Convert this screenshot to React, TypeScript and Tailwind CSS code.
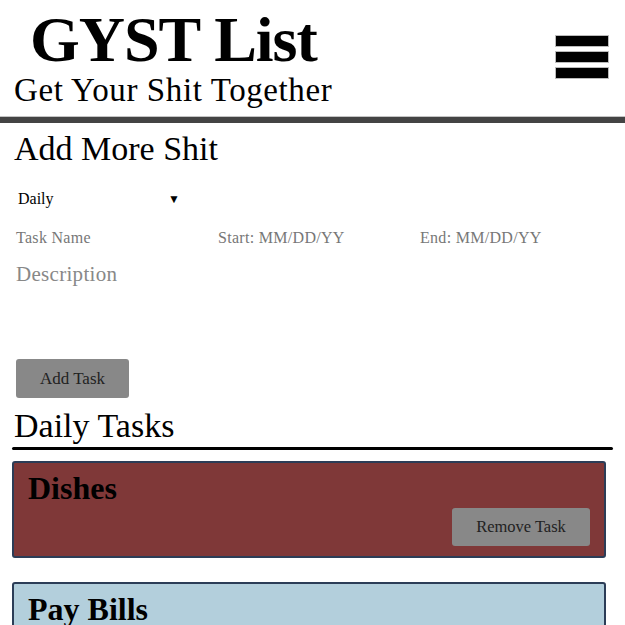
import React from 'react';

const serif = { fontFamily: '"Liberation Serif", "DejaVu Serif", serif' };

const tasks = [
  { name: 'Dishes', color: 'bg-[#7f3838]', removable: true },
  { name: 'Pay Bills', color: 'bg-[#b3cfdc]', removable: true },
];

const App: React.FC = () => {
  return (
    <div className="w-[625px] h-[625px] overflow-hidden bg-white text-black" style={serif}>
      {/* header */}
      <header className="flex justify-between items-start h-[123px] border-b-[6px] border-[#444] shadow-[0_-1px_0_#c4c4c4_inset]">
        <div className="flex flex-col">
          <h1 className="pl-[30px] pt-[8px] text-[64px] font-bold leading-[64px] tracking-[-1px]">GYST List</h1>
          <p className="pl-[14px] text-[33px] leading-[36px] tracking-[0.6px]">Get Your Shit Together</p>
        </div>
        <button className="mt-[35px] mr-[16px] flex flex-col gap-[4px]">
          <span className="block w-[54px] h-[12px] bg-black border border-[#bbb]" />
          <span className="block w-[54px] h-[12px] bg-black border border-[#bbb]" />
          <span className="block w-[54px] h-[12px] bg-black border border-[#bbb]" />
        </button>
      </header>

      {/* add form */}
      <section className="px-[14px]">
        <h2 className="mt-[6px] text-[34px] leading-[40px]">Add More Shit</h2>
        <div className="mt-[18px] flex items-center w-[166px] pl-[4px] text-[16px]">
          <span className="flex-1">Daily</span>
          <span className="text-[12px]">▼</span>
        </div>
        <div className="mt-[15px] flex text-[16px] tracking-[0.3px] text-[#777]">
          <span className="w-[202px] shrink-0 pl-[2px]">Task Name</span>
          <span className="w-[202px] shrink-0 pl-[2px]">Start: MM/DD/YY</span>
          <span className="w-[202px] shrink-0 pl-[2px]">End: MM/DD/YY</span>
        </div>
        <div className="mt-[9px] h-[92px] pl-[2px] text-[21px] tracking-[0.3px] text-[#888]">Description</div>
        <button className="ml-[2px] mt-[8px] w-[113px] h-[39px] rounded-[3px] bg-[#888] text-[17px] text-[#222]">Add Task</button>
      </section>

      {/* daily tasks */}
      <section className="px-[12px]">
        <h2 className="pl-[2px] mt-[8px] text-[34px] leading-[40px]">Daily Tasks</h2>
        <div className="mt-[1px] h-[3px] bg-black rounded-full" />
        <div className="mt-[11px] flex flex-col gap-[24px] w-[594px]">
          {tasks.map((t) => (
            <div key={t.name} className={`${t.color} border-2 border-[#2c3d57] rounded-[3px] h-[97px] px-[14px] pt-[8px] flex flex-col`}>
              <h3 className="text-[32px] font-bold leading-[34px]">{t.name}</h3>
              {t.removable && (
                <div className="flex justify-end mt-[3px]">
                  <button className="w-[138px] h-[38px] rounded-[3px] bg-[#888] text-[16.5px] text-[#222]">Remove Task</button>
                </div>
              )}
            </div>
          ))}
        </div>
      </section>
    </div>
  );
};

export default App;
